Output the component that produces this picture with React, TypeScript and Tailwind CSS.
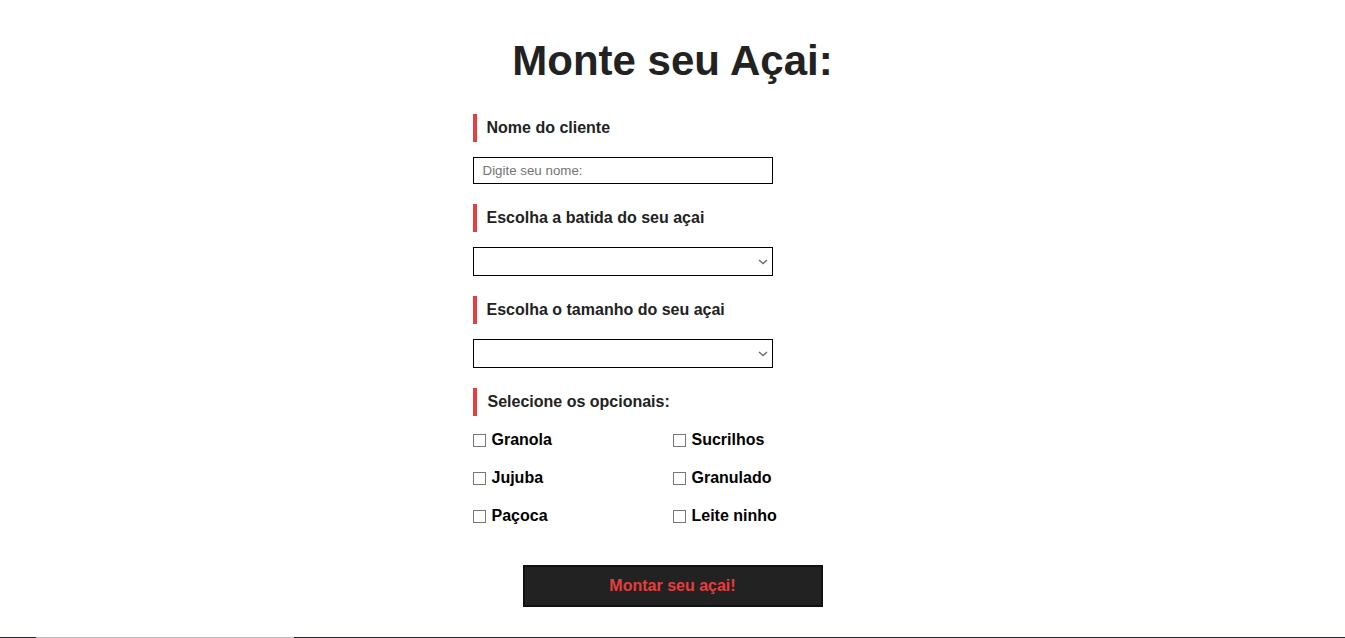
import React from "react";

const Label = ({ children, extra = "" }: { children: React.ReactNode; extra?: string }) => (
  <div className={`h-[28px] border-l-4 border-[#e53e3e] flex items-center text-[16px] font-bold text-[#222] ${extra}`}>
    {children}
  </div>
);

const Check = ({ label }: { label: string }) => (
  <label className="flex items-center h-[18px]">
    <input
      type="checkbox"
      className="appearance-none w-[13px] h-[13px] m-0 border border-[#767676] bg-white rounded-none shrink-0"
    />
    <span className="ml-[6px] text-[16px] font-bold text-black leading-[18px]">{label}</span>
  </label>
);

const Select = () => (
  <div className="relative mt-[15px] w-[300px] h-[29px]">
    <select className="appearance-none w-full h-full border border-black bg-white text-[13.33px] rounded-none outline-none">
      <option></option>
    </select>
    <svg
      className="absolute right-[5px] top-[12px] pointer-events-none"
      width="10"
      height="6"
      viewBox="0 0 10 6"
      fill="none"
    >
      <path d="M1 1 L5 4.5 L9 1" stroke="#6d6d6d" strokeWidth="1.4" />
    </svg>
  </div>
);

export default function App() {
  return (
    <div className="min-h-[638px] bg-white flex flex-col" style={{ fontFamily: '"Liberation Sans", Arial, sans-serif' }}>
      <div className="w-[400px] mx-auto pt-[37px] flex flex-col">
        <h1 className="text-[42px] leading-[47px] font-bold text-[#222] text-center">Monte seu Açai:</h1>

        <Label extra="mt-[30px] pl-[10px]">Nome do cliente</Label>
        <input
          type="text"
          placeholder="Digite seu nome:"
          className="mt-[15px] w-[300px] h-[27px] border border-black pl-[9px] text-[13.33px] placeholder:text-[#757575] outline-none"
        />

        <Label extra="mt-[20px] pl-[10px]">Escolha a batida do seu açai</Label>
        <Select />

        <Label extra="mt-[20px] pl-[10px]">Escolha o tamanho do seu açai</Label>
        <Select />

        <Label extra="mt-[20px] pl-[11px]">Selecione os opcionais:</Label>
        <div className="mt-[15px] grid grid-cols-[200px_200px] gap-y-[20px]">
          <Check label="Granola" />
          <Check label="Sucrilhos" />
          <Check label="Jujuba" />
          <Check label="Granulado" />
          <Check label="Paçoca" />
          <Check label="Leite ninho" />
        </div>

        <button className="mt-[40px] mx-auto w-[300px] h-[42px] bg-[#222] border-2 border-[#111] text-[#e53e3e] text-[16px] font-bold">
          Montar seu açai!
        </button>
      </div>
      <footer className="mt-[30px] bg-[#22262e] h-[60px]">
        <div className="flex h-[1px]">
          <div className="w-[36px]" />
          <div className="w-[258px] bg-[#bbbbbb]" />
        </div>
      </footer>
    </div>
  );
}
